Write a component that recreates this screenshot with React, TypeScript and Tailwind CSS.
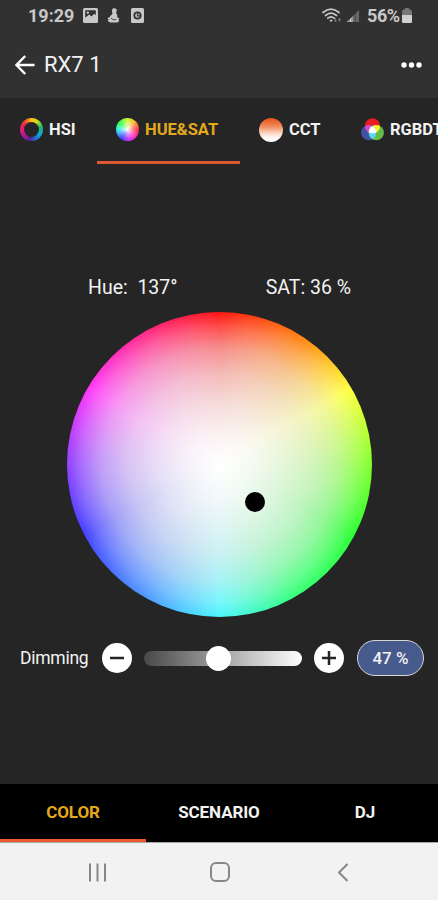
import React, { useState } from "react";

const HUES =
  "bg-[conic-gradient(#ff1410,#ff8a10_35deg,#ffff38_60deg,#80ff28_90deg,#28ff30_117deg,#34ff78_150deg,#4cf6ff_180deg,#4c96ff_210deg,#4240ff_243deg,#9640ff_272deg,#ff34fa_300deg,#ff2888_330deg,#ff1410)]";

const WASH =
  "bg-[radial-gradient(closest-side,#fff_0%,rgba(250,250,250,0.96)_20%,rgba(245,245,245,0.88)_40%,rgba(240,240,240,0.75)_60%,rgba(240,240,240,0.54)_77%,rgba(248,248,248,0.26)_90%,rgba(255,255,255,0)_100%)]";

function HsiIcon() {
  return (
    <div className="flex h-[23px] w-[23px] items-center justify-center rounded-full bg-[conic-gradient(#ffc414,#c8e020_35deg,#20b868_75deg,#10a8e0_120deg,#2864c8_160deg,#50208c_190deg,#9c1c94_220deg,#e0187c_265deg,#e83040_310deg,#f89018_345deg,#ffc414)]">
      <div className="h-[15px] w-[15px] rounded-full bg-[#252525]" />
    </div>
  );
}

function HueIcon() {
  return (
    <div className="h-[23px] w-[23px] rounded-full bg-[radial-gradient(closest-side,#ffffff_0%,rgba(255,255,255,0.4)_45%,transparent_90%),conic-gradient(#c8f838,#ffb830_40deg,#ff3048_90deg,#ff30b0_130deg,#d030ff_170deg,#4440ff_215deg,#38b0ff_250deg,#30f8d0_275deg,#30ff50_310deg,#c8f838)]" />
  );
}

function CctIcon() {
  return (
    <div className="h-[24px] w-[24px] rounded-full bg-[linear-gradient(#e8591e_5%,#f08a5c_35%,#fbd9c8_65%,#ffffff_88%)]" />
  );
}

function RgbIcon() {
  return (
    <svg width="23" height="23" viewBox="0 0 23 23">
      <defs>
        <clipPath id="rgb-red">
          <circle cx="11.5" cy="7.8" r="7.6" />
        </clipPath>
        <clipPath id="rgb-blue">
          <circle cx="7.7" cy="14.7" r="7.6" />
        </clipPath>
        <clipPath id="rgb-redblue" clipPath="url(#rgb-red)">
          <circle cx="7.7" cy="14.7" r="7.6" />
        </clipPath>
      </defs>
      <circle cx="11.5" cy="7.8" r="7.6" fill="#ea1c24" />
      <circle cx="7.7" cy="14.7" r="7.6" fill="#3f52a4" />
      <circle cx="15.3" cy="14.7" r="7.6" fill="#62bc46" />
      <circle cx="7.7" cy="14.7" r="7.6" fill="#dc4bc0" clipPath="url(#rgb-red)" />
      <circle cx="15.3" cy="14.7" r="7.6" fill="#fff030" clipPath="url(#rgb-red)" />
      <circle cx="15.3" cy="14.7" r="7.6" fill="#60d4ee" clipPath="url(#rgb-blue)" />
      <circle cx="15.3" cy="14.7" r="7.6" fill="#ffffff" clipPath="url(#rgb-redblue)" />
    </svg>
  );
}

function StatusBar() {
  return (
    <div className="flex h-[31px] items-center justify-between pl-[28px] pr-[26px] text-[#c8c8c8]">
      <div className="flex items-center">
        <span className="w-[47px] text-[18px] font-bold leading-none">
          19:29
        </span>
        <svg className="ml-[8px]" width="15" height="15" viewBox="0 0 15 15">
          <rect width="15" height="15" rx="1.5" fill="#c8c8c8" />
          <path d="M2.2 2.2h10.6v5L11.2 5.8 8.500 8.500l-2.300-2-4 3.300z" fill="#313131" />
          <circle cx="4.8" cy="4.6" r="1.2" fill="#c8c8c8" />
        </svg>
        <svg className="ml-[9px]" width="13" height="15" viewBox="0 0 13 15">
          <path
            d="M6 .5c2-.8 4 .4 3.700 2.300-.1 1-.8 1.700-.4 2.600.8 1.100 1.400 2.300.9 3.800l2.500 1.500-1.400 1.100 1 1.300-2 1.500H3.200L.5 12.800l1.200-1.200L.3 10l2.500-.7C3 7.600 5 7 5.500 5.600 5 4.500 4.500 1.400 6 .5z"
            fill="#c8c8c8"
          />
          <path d="M4 10c1.500 1.700 3.500 2.200 5 1.400" stroke="#313131" strokeWidth=".9" fill="none" />
        </svg>
        <svg className="ml-[11px]" width="13" height="15" viewBox="0 0 13 15">
          <rect width="13" height="15" rx="1.5" fill="#c8c8c8" />
          <circle cx="6.5" cy="7.5" r="3.2" fill="none" stroke="#313131" strokeWidth="1.7" />
          <path d="M6.500 5.500v2.300h2.500" stroke="#313131" strokeWidth="1.2" fill="none" />
        </svg>
      </div>
      <div className="flex items-center">
        <svg className="mr-[3px]" width="20" height="16" viewBox="0 0 20 16" fill="none" stroke="#c8c8c8" strokeLinecap="round">
          <path d="M1 4.500C6 .2 12 .2 17 4.500" strokeWidth="1.7" />
          <path d="M3.500 7.500c3.500-3 7.500-3 11 0" strokeWidth="1.7" />
          <path d="M5.800 10.200c2-1.700 4.400-1.700 6.400 0" strokeWidth="1.7" />
          <circle cx="9" cy="12.6" r=".8" fill="#c8c8c8" strokeWidth=".8" />
          <path d="M13.500 10.500v3M12.500 12.600l1 1.200 1-1.200M17.500 13.500v-3M16.500 11.700l1-1.200 1 1.200" stroke="#777" strokeWidth="1" />
        </svg>
        <svg className="ml-[1px]" width="14" height="14" viewBox="0 0 15 15">
          <path d="M14 1v13H1z" fill="#686868" />
          <path d="M7.500 7.500V14H1z" fill="#c8c8c8" />
          <path d="M3.500 8v7M6.500 6v9M10 3v12" stroke="#313131" strokeWidth=".6" />
        </svg>
        <span className="ml-[7px] w-[35px] text-[18px] font-bold leading-none tracking-[-0.4px]">
          56%
        </span>
        <svg width="10" height="15" viewBox="0 0 10 15">
          <path d="M3 0h4v1.500h1.500L10 3v11l-1 1H1l-1-1V3l1.500-1.500H3z" fill="#777" />
          <path d="M0 7h10v7l-1 1H1l-1-1z" fill="#d0d0d0" />
        </svg>
      </div>
    </div>
  );
}

const modes = [
  { label: "HSI", icon: <HsiIcon />, width: "w-[97px] pl-[20px]" },
  { label: "HUE&SAT", icon: <HueIcon />, width: "w-[143px] pl-[19px]" },
  { label: "CCT", icon: <CctIcon />, width: "w-[101px] pl-[19px]" },
  { label: "RGBDT", icon: <RgbIcon />, width: "w-[130px] pl-[20px]" },
];

const sections = ["COLOR", "SCENARIO", "DJ"];

export default function App() {
  const [mode, setMode] = useState("HUE&SAT");
  const [section, setSection] = useState("COLOR");
  const [dimming, setDimming] = useState(47);

  return (
    <div className="flex h-[900px] w-[438px] flex-col overflow-hidden bg-[#252525] font-['Roboto',sans-serif] text-[#f2f2f2]">
      <header className="h-[98px] shrink-0 bg-[#313131]">
        <StatusBar />
        <div className="flex h-[67px] items-center pl-[15px] pr-[16px]">
          <svg width="20" height="20" viewBox="0 0 20 20" fill="none" stroke="#fff" strokeWidth="2.4">
            <path d="M19.500 10H2M10.200 1L1.500 10l8.700 9" />
          </svg>
          <h1 className="ml-[9px] text-[22px] leading-none">RX7 1</h1>
          <svg className="ml-auto" width="21" height="6" viewBox="0 0 21 6" fill="#fff">
            <circle cx="3" cy="3" r="2.7" />
            <circle cx="10.5" cy="3" r="2.7" />
            <circle cx="18" cy="3" r="2.7" />
          </svg>
        </div>
      </header>

      <nav className="flex h-[66px] shrink-0 overflow-hidden">
        {modes.map((m) => (
          <button
            key={m.label}
            onClick={() => setMode(m.label)}
            className={`flex shrink-0 items-center gap-[6px] border-b-[3px] text-[16.5px] font-bold leading-none ${m.width} ${
              mode === m.label
                ? "border-[#dc5a32] text-[#e3a91d]"
                : "border-transparent"
            }`}
          >
            {m.icon}
            <span className="pt-[2px]">{m.label}</span>
          </button>
        ))}
      </nav>

      <main className="flex flex-1 flex-col items-center">
        <div className="mt-[113px] flex w-full justify-between pl-[88px] pr-[87px] text-[19.5px] leading-[22px]">
          <span className="whitespace-pre">Hue:  137°</span>
          <span>SAT: 36 %</span>
        </div>

        <div className={`relative mt-[13px] h-[305px] w-[305px] rounded-full ${HUES}`}>
          <div className={`h-full w-full rounded-full ${WASH}`} />
          <div className="absolute left-[178px] top-[180px] h-[20px] w-[20px] rounded-full bg-black" />
        </div>

        <div className="mt-[23px] flex h-[36px] w-full items-center pl-[20px] pr-[14px]">
          <span className="w-[82px] pt-[2px] text-[17.5px] leading-none tracking-[-0.25px]">
            Dimming
          </span>
          <button
            onClick={() => setDimming(Math.max(0, dimming - 1))}
            className="flex h-[30px] w-[30px] items-center justify-center rounded-full bg-white"
          >
            <svg width="16" height="16" viewBox="0 0 16 16" stroke="#252525" strokeWidth="2.5">
              <path d="M1 8h14" />
            </svg>
          </button>
          <div className="relative ml-[12px] h-[15px] w-[158px] rounded-full bg-[linear-gradient(90deg,#484848,#ffffff)]">
            <div
              className="absolute top-[-5px] ml-[-12.5px] h-[25px] w-[25px] rounded-full bg-white"
              style={{ left: `${dimming}%` }}
            />
          </div>
          <button
            onClick={() => setDimming(Math.min(100, dimming + 1))}
            className="ml-[12px] flex h-[30px] w-[30px] items-center justify-center rounded-full bg-white"
          >
            <svg width="16" height="16" viewBox="0 0 16 16" stroke="#252525" strokeWidth="2.5">
              <path d="M1 8h14M8 1v14" />
            </svg>
          </button>
          <div className="ml-auto flex h-[36px] w-[67px] items-center justify-center rounded-full border-[1.5px] border-[#d8d8d8] bg-[#465a8c] text-[17px] font-medium leading-none">
            {dimming} %
          </div>
        </div>
      </main>

      <footer className="shrink-0">
        <div className="grid h-[58px] grid-cols-3 bg-black">
          {sections.map((s) => (
            <button
              key={s}
              onClick={() => setSection(s)}
              className={`border-b-[3px] pt-[2px] text-[17px] font-bold leading-none tracking-[-0.1px] ${
                section === s
                  ? "border-[#ee5a30] text-[#e3a91d]"
                  : "border-transparent"
              }`}
            >
              {s}
            </button>
          ))}
        </div>
        <div className="flex h-[58px] items-center border-t border-[#a8a8a8] bg-[#f2f2f2] pl-[88px] pt-px">
          <svg width="19" height="19" viewBox="0 0 19 19" stroke="#868686" strokeWidth="2">
            <path d="M2 .5v18M9.500 .5v18M17 .5v18" />
          </svg>
          <svg className="ml-[103px]" width="20" height="20" viewBox="0 0 20 20" fill="none" stroke="#868686" strokeWidth="2">
            <rect x="1" y="1" width="18" height="18" rx="5" />
          </svg>
          <svg className="ml-[107px]" width="12" height="19" viewBox="0 0 12 19" fill="none" stroke="#868686" strokeWidth="2">
            <path d="M10.500 1L2 9.500l8.500 8.500" />
          </svg>
        </div>
      </footer>
    </div>
  );
}
